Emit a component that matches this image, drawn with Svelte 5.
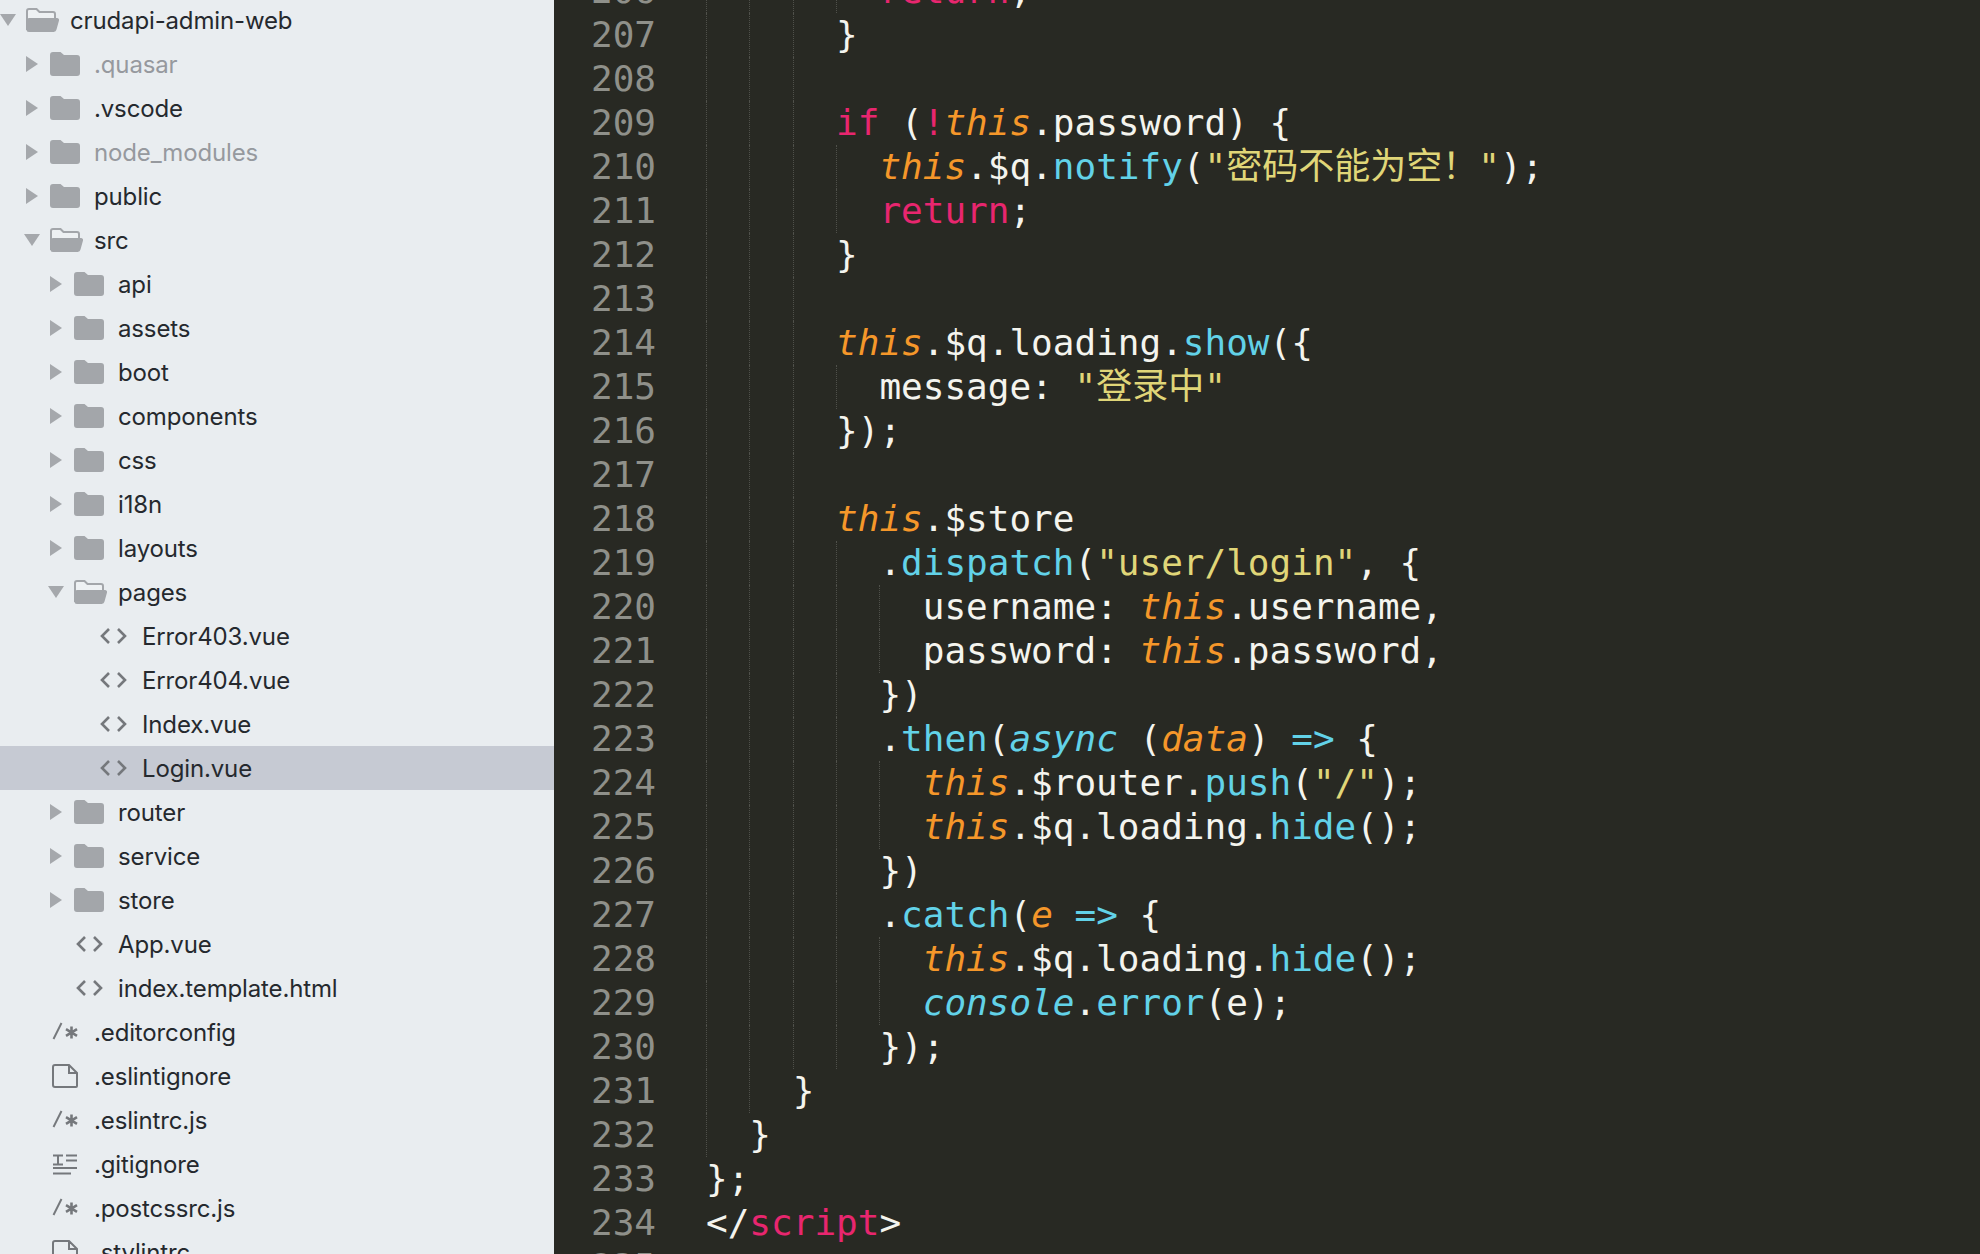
<script>
	const rows = [
		{ name: 'crudapi-admin-web', depth: 0, icon: 'open', arrow: 'down' },
		{ name: '.quasar', depth: 1, icon: 'folder', arrow: 'right', dim: true },
		{ name: '.vscode', depth: 1, icon: 'folder', arrow: 'right' },
		{ name: 'node_modules', depth: 1, icon: 'folder', arrow: 'right', dim: true },
		{ name: 'public', depth: 1, icon: 'folder', arrow: 'right' },
		{ name: 'src', depth: 1, icon: 'open', arrow: 'down' },
		{ name: 'api', depth: 2, icon: 'folder', arrow: 'right' },
		{ name: 'assets', depth: 2, icon: 'folder', arrow: 'right' },
		{ name: 'boot', depth: 2, icon: 'folder', arrow: 'right' },
		{ name: 'components', depth: 2, icon: 'folder', arrow: 'right' },
		{ name: 'css', depth: 2, icon: 'folder', arrow: 'right' },
		{ name: 'i18n', depth: 2, icon: 'folder', arrow: 'right' },
		{ name: 'layouts', depth: 2, icon: 'folder', arrow: 'right' },
		{ name: 'pages', depth: 2, icon: 'open', arrow: 'down' },
		{ name: 'Error403.vue', depth: 3, icon: 'code' },
		{ name: 'Error404.vue', depth: 3, icon: 'code' },
		{ name: 'Index.vue', depth: 3, icon: 'code' },
		{ name: 'Login.vue', depth: 3, icon: 'code', selected: true },
		{ name: 'router', depth: 2, icon: 'folder', arrow: 'right' },
		{ name: 'service', depth: 2, icon: 'folder', arrow: 'right' },
		{ name: 'store', depth: 2, icon: 'folder', arrow: 'right' },
		{ name: 'App.vue', depth: 2, icon: 'code' },
		{ name: 'index.template.html', depth: 2, icon: 'code' },
		{ name: '.editorconfig', depth: 1, icon: 'comment' },
		{ name: '.eslintignore', depth: 1, icon: 'file' },
		{ name: '.eslintrc.js', depth: 1, icon: 'comment' },
		{ name: '.gitignore', depth: 1, icon: 'list' },
		{ name: '.postcssrc.js', depth: 1, icon: 'comment' },
		{ name: '.stylintrc', depth: 1, icon: 'file' }
	];

	// token classes: k keyword, t this/param, f function, s string, i italic function
	const k = (text) => [text, 'k'];
	const t = (text) => [text, 't'];
	const f = (text) => [text, 'f'];
	const s = (text) => [text, 's'];
	const i = (text) => [text, 'i'];

	// [indent in columns, tokens], starting at line 206
	const source = [
		[8, [k('return'), ';']],
		[6, ['}']],
		[6, []],
		[6, [k('if'), ' (', k('!'), t('this'), '.password) {']],
		[8, [t('this'), '.$q.', f('notify'), '(', s('"密码不能为空！"'), ');']],
		[8, [k('return'), ';']],
		[6, ['}']],
		[6, []],
		[6, [t('this'), '.$q.loading.', f('show'), '({']],
		[8, ['message: ', s('"登录中"')]],
		[6, ['});']],
		[6, []],
		[6, [t('this'), '.$store']],
		[8, ['.', f('dispatch'), '(', s('"user/login"'), ', {']],
		[10, ['username: ', t('this'), '.username,']],
		[10, ['password: ', t('this'), '.password,']],
		[8, ['})']],
		[8, ['.', f('then'), '(', i('async'), ' (', t('data'), ') ', f('=>'), ' {']],
		[10, [t('this'), '.$router.', f('push'), '(', s('"/"'), ');']],
		[10, [t('this'), '.$q.loading.', f('hide'), '();']],
		[8, ['})']],
		[8, ['.', f('catch'), '(', t('e'), ' ', f('=>'), ' {']],
		[10, [t('this'), '.$q.loading.', f('hide'), '();']],
		[10, [i('console'), '.', f('error'), '(e);']],
		[8, ['});']],
		[4, ['}']],
		[2, ['}']],
		[0, ['};']],
		[0, ['</', k('script'), '>']],
		[0, []]
	];

	const lines = source.map(([indent, tokens], n) => ({
		num: 206 + n,
		guides: Array(indent / 2).fill(0),
		tokens: tokens.map((tok) => (typeof tok === 'string' ? [tok, ''] : tok))
	}));
</script>

{#snippet icon(kind)}
	<svg class="icon" width="34" height="24" viewBox="0 0 34 24">
		{#if kind === 'folder'}
			<path class="fill" d="M0 3a3 3 0 0 1 3-3h7.5l3.5 3h13a3 3 0 0 1 3 3v15a3 3 0 0 1-3 3H3a3 3 0 0 1-3-3z" />
		{:else if kind === 'open'}
			<path class="paper" d="M1 22V3a2 2 0 0 1 2-2h7.5l3 3H27a2 2 0 0 1 2 2v6H1z" />
			<path class="fill" d="M1 11.5a2 2 0 0 1 2-1.5h28a2 2 0 0 1 2 2.5l-2.5 9a3 3 0 0 1-3 2.5H3a2.5 2.5 0 0 1-2.5-2.5z" />
		{:else if kind === 'code'}
			<path class="line-icon" d="M11 5l-7 7 7 7M20 5l7 7-7 7" />
		{:else if kind === 'comment'}
			<path class="line-icon thin" d="M3.5 19L11.5 3" />
			<path class="line-icon" d="M21.5 6.500v12M16 9.200l11 6.600M27 9.200l-11 6.600" />
		{:else if kind === 'file'}
			<path class="line-icon thin" d="M19 1H5a2 2 0 0 0-2 2v18a2 2 0 0 0 2 2h21a1 1 0 0 0 1-1V9zM19 1v8h8" />
		{:else}
			<path class="line-icon thin" d="M3 3.500h10M8 3.500V12M3 12.500h10M16 3.500h11M16 8.500h11M3 16h24M3 21.500h18" />
		{/if}
	</svg>
{/snippet}

<div class="window">
	<aside class="sidebar">
		<div class="tree">
			{#each rows as row}
				<div class="row" class:selected={row.selected} style="padding-left: {row.depth * 24}px">
					<span class="arrow">
						{#if row.arrow === 'down'}
							<svg width="16" height="16" viewBox="0 0 16 16"><path d="M0 2h16L8 14z" /></svg>
						{:else if row.arrow === 'right'}
							<svg width="16" height="16" viewBox="0 0 16 16"><path d="M2 0l12 8-12 8z" /></svg>
						{/if}
					</span>
					{@render icon(row.icon)}
					<span class="name" class:dim={row.dim}>{row.name}</span>
				</div>
			{/each}
		</div>
	</aside>

	<main class="editor">
		<div class="lines">
			{#each lines as line}
				<div class="line">
					<span class="num">{line.num}</span>
					<span class="code">{#each line.guides as _}<span class="guide"></span>{/each}{#each line.tokens as [text, cls]}<span class={cls}>{text}</span>{/each}</span>
				</div>
			{/each}
		</div>
	</main>
</div>

<style>
	:global(body) {
		margin: 0;
		background: #282923;
	}

	.window {
		display: flex;
		height: 1254px;
		overflow: hidden;
	}

	.sidebar {
		width: 554px;
		flex-shrink: 0;
		background: #e9edf0;
		overflow: hidden;
	}

	.tree {
		margin-top: -2px;
	}

	.row {
		display: flex;
		align-items: center;
		height: 44px;
	}

	.row.selected {
		background: #c6cad3;
	}

	.arrow {
		display: flex;
		width: 26px;
		flex-shrink: 0;
		fill: #a5a8ac;
	}

	.icon {
		flex-shrink: 0;
		margin-right: 10px;
	}

	.fill {
		fill: #a3a6aa;
	}

	.paper {
		fill: #eef1f3;
		stroke: #a3a6aa;
		stroke-width: 2;
	}

	.line-icon {
		fill: none;
		stroke: #75787c;
		stroke-width: 2.6;
	}

	.line-icon.thin {
		stroke-width: 2;
	}

	.name {
		font-family: Inter, "Noto Sans", sans-serif;
		font-size: 24px;
		letter-spacing: -0.14px;
		font-feature-settings: "calt" 1;
		color: #25292e;
		white-space: nowrap;
	}

	.name.dim {
		color: #96999e;
	}

	.editor {
		flex: 1;
		background: #282923;
		overflow: hidden;
	}

	.lines {
		margin-top: -31px;
		font-family: "DejaVu Sans Mono", "Noto Sans CJK SC", monospace;
		font-size: 36px;
		line-height: 44px;
		color: #f4f4ee;
	}

	.line {
		display: flex;
		height: 44px;
	}

	.num {
		width: 102px;
		flex-shrink: 0;
		margin-right: 50px;
		text-align: right;
		color: #8f908a;
	}

	.code {
		white-space: pre;
	}

	.guide {
		display: inline-block;
		box-sizing: border-box;
		width: 2ch;
		height: 44px;
		vertical-align: top;
		border-left: 1px dotted #4f504a;
	}

	.k {
		color: #e8266f;
	}

	.t {
		color: #f5972a;
		font-style: italic;
	}

	.f {
		color: #62d2e8;
	}

	.i {
		color: #62d2e8;
		font-style: italic;
	}

	.s {
		color: #e0d678;
	}
</style>
